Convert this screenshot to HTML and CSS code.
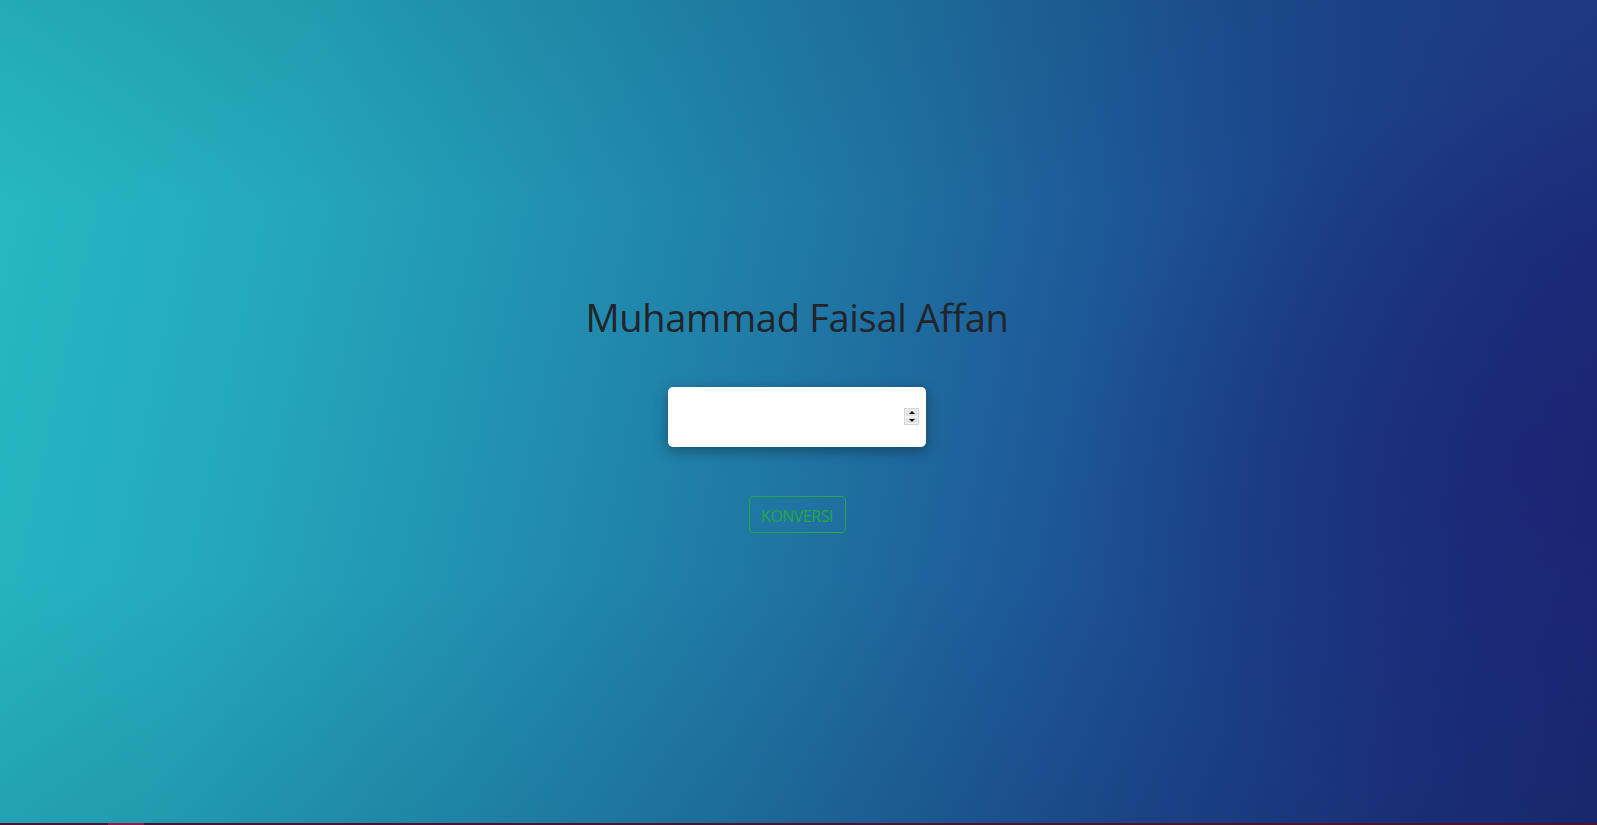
FILE: index.html
```html
<!DOCTYPE html>
<html lang="id">
<head>
<meta charset="utf-8">
<title>Konversi</title>
<link rel="stylesheet" href="styles.css">
</head>
<body>
<div class="page">
  <main class="content">
    <h1 class="title">Muhammad Faisal Affan</h1>
    <div class="field">
      <input class="number" type="number" aria-label="angka">
      <span class="spin" aria-hidden="true">
        <span class="spin-btn"><span class="tri up"></span></span>
        <span class="spin-btn"><span class="tri down"></span></span>
      </span>
    </div>
    <button class="btn" type="button">KONVERSI</button>
  </main>
</div>
<div class="strip"><span class="strip-mark"></span></div>
</body>
</html>
```
FILE: styles.css
```css
* { box-sizing: border-box; }
html, body { margin: 0; padding: 0; }
body {
  width: 1597px;
  height: 825px;
  overflow: hidden;
  font-family: "Open Sans", "Noto Sans", sans-serif;
  color: #212529;
}
.page {
  height: 823px;
  background:
    radial-gradient(ellipse 30% 45% at 97% 56%, rgba(26, 30, 110, 0.45), rgba(26, 30, 110, 0) 100%),
    radial-gradient(ellipse 25% 30% at 100% 0%, rgba(40, 80, 150, 0.35), rgba(40, 80, 150, 0) 100%),
    linear-gradient(180deg, rgba(10,30,60,0.10) 0%, rgba(0,0,0,0) 25%, rgba(0,0,0,0) 70%, rgba(10,30,60,0.10) 100%),
    linear-gradient(102deg, #26bac4 0%, #24a9bc 18%, #218fb0 35%, #1f72a2 52%, #1d5696 66%, #1b4088 78%, #1b2f7c 90%, #1a2873 100%);
}
.content {
  display: flex;
  flex-direction: column;
  align-items: center;
  padding-top: 293px;
  padding-right: 3px;
}
.title {
  margin: 0;
  font-size: 38px;
  font-weight: 400;
  line-height: 48px;
  color: #212529;
  letter-spacing: -0.3px;
}
.field {
  position: relative;
  margin-top: 46px;
}
.number {
  display: block;
  width: 258px;
  height: 60px;
  border: none;
  border-radius: 5px;
  background: #fff;
  box-shadow: 0 4px 14px rgba(0, 0, 0, 0.35);
  padding: 0 6px 0 12px;
  font-size: 16px;
  outline: none;
}
.number::-webkit-inner-spin-button,
.number::-webkit-outer-spin-button {
  -webkit-appearance: none;
  margin: 0;
}
.spin {
  position: absolute;
  left: 236px;
  top: 21px;
  width: 15px;
  height: 17px;
  display: flex;
  flex-direction: column;
  background: #eaeaea;
  border: 1px solid #d4d4d4;
}
.spin-btn {
  flex: 1;
  display: flex;
  align-items: center;
  justify-content: center;
  background: #e3e3e3;
  border: 1px solid #f2f2f2;
}
.tri {
  width: 0;
  height: 0;
  border-left: 3px solid transparent;
  border-right: 3px solid transparent;
}
.tri.up { border-bottom: 3px solid #111; }
.tri.down { border-top: 3px solid #111; }
.btn {
  margin-top: 49px;
  width: 97px;
  height: 37px;
  border: 1px solid #28a745;
  border-radius: 4px;
  background: transparent;
  color: #28a745;
  font-family: "Open Sans", "Noto Sans", sans-serif;
  font-size: 16px;
  letter-spacing: -0.5px;
  padding: 2px 0 0;
  cursor: pointer;
}
.strip {
  height: 2px;
  background: #4a1530;
  display: flex;
}
.strip-mark {
  margin-left: 108px;
  width: 36px;
  height: 2px;
  background: #8f1d45;
}
```
